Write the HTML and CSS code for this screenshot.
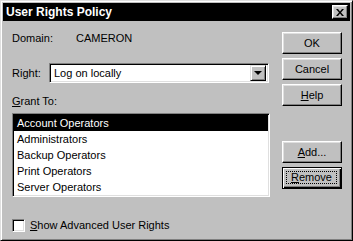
FILE: index.html
```html
<!DOCTYPE html>
<html lang="en">
<head>
    <meta charset="UTF-8">
    <title>User Rights Policy</title>
    <link rel="stylesheet" href="styles.css">
</head>
<body>
    <div class="window">
        <div class="titlebar">
            <span class="title">User Rights Policy</span>
            <span class="close">
                <svg width="8" height="7" viewBox="0 0 8 7">
                    <path d="M0 0h2l2 2.5 2-2.5h2l-3 3.5 3 3.5h-2l-2-2.5-2 2.5h-2l3-3.5z" fill="#000"/>
                </svg>
            </span>
        </div>
        <div class="body">
            <div class="main">
                <div class="domain">
                    <span class="domain-label">Domain:</span>
                    <span>CAMERON</span>
                </div>
                <div class="right-row">
                    <span class="right-label">Ri<u>g</u>ht:</span>
                    <div class="combo">
                        <span class="combo-text">Log on locally</span>
                        <span class="combo-btn"><span class="arrow"></span></span>
                    </div>
                </div>
                <div class="grant-label"><u>G</u>rant To:</div>
                <ul class="list">
                    <li class="selected">Account Operators</li>
                    <li>Administrators</li>
                    <li>Backup Operators</li>
                    <li>Print Operators</li>
                    <li>Server Operators</li>
                </ul>
                <div class="check">
                    <span class="box"></span>
                    <span><u>S</u>how Advanced User Rights</span>
                </div>
            </div>
            <div class="buttons">
                <button class="btn">OK</button>
                <button class="btn">Cancel</button>
                <button class="btn"><u>H</u>elp</button>
                <button class="btn add"><u>A</u>dd...</button>
                <button class="btn focused"><span class="focus"><u>R</u>emove</span></button>
            </div>
        </div>
    </div>
</body>
</html>
```

FILE: styles.css
```css
body {
    margin: 0;
    background: #c0c0c0;
    font-family: 'Liberation Sans', Arial, sans-serif;
    font-size: 11px;
    line-height: 13px;
    color: #000;
}
u {
    text-decoration: underline;
    text-underline-offset: 1px;
}
.window {
    box-sizing: border-box;
    width: 353px;
    height: 241px;
    background: #c0c0c0;
    border: 1px solid;
    border-color: #dfdfdf #000 #000 #dfdfdf;
    box-shadow: inset 1px 1px #fff, inset -1px -1px #808080;
    padding: 2px;
    display: flex;
    flex-direction: column;
}
.titlebar {
    height: 18px;
    background: #000;
    color: #fff;
    display: flex;
    align-items: center;
    justify-content: space-between;
    padding: 0 2px 0 3px;
}
.title {
    font-weight: bold;
    font-size: 12px;
}
.close {
    box-sizing: border-box;
    width: 16px;
    height: 14px;
    background: #c0c0c0;
    border: 1px solid;
    border-color: #fff #000 #000 #fff;
    box-shadow: inset -1px -1px #808080, inset 1px 1px #dfdfdf;
    display: flex;
    align-items: center;
    justify-content: center;
}
.body {
    flex: 1;
    display: flex;
    padding: 11px 9px 0 9px;
}
.main {
    flex: 1;
    display: flex;
    flex-direction: column;
}
.domain {
    display: flex;
}
.domain-label {
    width: 64px;
}
.right-row {
    display: flex;
    align-items: center;
    margin-top: 18px;
}
.right-label {
    width: 37px;
}
.combo {
    box-sizing: border-box;
    width: 220px;
    height: 20px;
    background: #fff;
    border: 1px solid;
    border-color: #808080 #fff #fff #808080;
    box-shadow: inset 1px 1px #000, inset -1px -1px #dfdfdf;
    display: flex;
    align-items: center;
    padding: 2px;
}
.combo-text {
    flex: 1;
    padding-left: 2px;
}
.combo-btn {
    box-sizing: border-box;
    width: 16px;
    height: 16px;
    background: #c0c0c0;
    border: 1px solid;
    border-color: #dfdfdf #000 #000 #dfdfdf;
    box-shadow: inset 1px 1px #fff, inset -1px -1px #808080;
    display: flex;
    align-items: center;
    justify-content: center;
}
.arrow {
    width: 0;
    height: 0;
    border-left: 4px solid transparent;
    border-right: 4px solid transparent;
    border-top: 4px solid #000;
}
.grant-label {
    margin-top: 12px;
}
.list {
    box-sizing: border-box;
    width: 258px;
    height: 84px;
    margin: 5px 0 0 0;
    padding: 1px;
    list-style: none;
    background: #fff;
    border: 1px solid;
    border-color: #808080 #fff #fff #808080;
    box-shadow: inset 1px 1px #000, inset -1px -1px #dfdfdf;
}
.list li {
    height: 16px;
    line-height: 16px;
    padding-left: 3px;
}
.list .selected {
    background: #000;
    color: #fff;
}
.check {
    display: flex;
    align-items: center;
    margin-top: 22px;
}
.box {
    box-sizing: border-box;
    width: 13px;
    height: 13px;
    margin-right: 5px;
    background: #fff;
    border: 1px solid;
    border-color: #808080 #fff #fff #808080;
    box-shadow: inset 1px 1px #000, inset -1px -1px #dfdfdf;
}
.buttons {
    width: 60px;
    margin-left: 12px;
    display: flex;
    flex-direction: column;
    gap: 4px;
}
.btn {
    box-sizing: border-box;
    width: 60px;
    height: 22px;
    padding: 0;
    font: inherit;
    color: #000;
    background: #c0c0c0;
    border: 1px solid;
    border-color: #fff #000 #000 #fff;
    box-shadow: inset -1px -1px #808080, inset 1px 1px #dfdfdf;
}
.add {
    margin-top: 31px;
}
.focused {
    border-color: #000;
    box-shadow: inset 1px 1px #fff, inset -1px -1px #000, inset -2px -2px #808080;
    display: flex;
    padding: 3px 4px 4px 3px;
}
.focus {
    flex: 1;
    border: 1px dotted #000;
    display: flex;
    align-items: center;
    justify-content: center;
}
```
